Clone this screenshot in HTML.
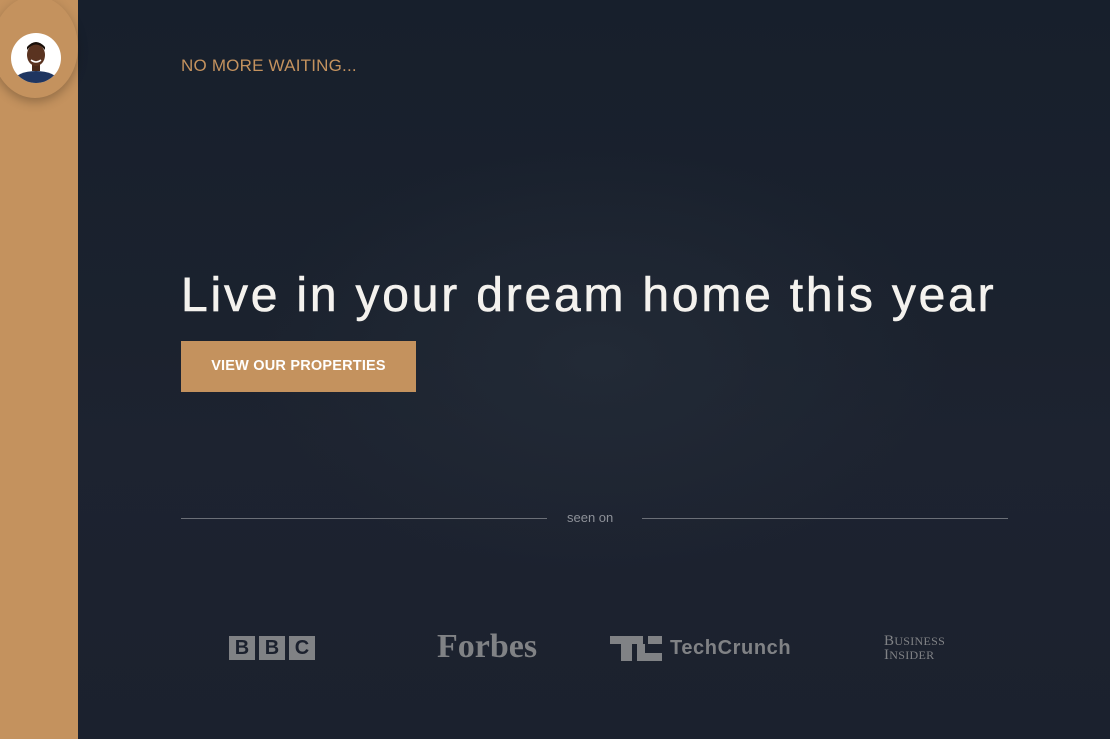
<!DOCTYPE html>
<html><head><style>
*{margin:0;padding:0;box-sizing:border-box}
body{width:1110px;height:739px;overflow:hidden;background:#19202d;font-family:"Liberation Sans",sans-serif;position:relative}
.bg{position:absolute;left:78px;top:0;width:1032px;height:739px;background:
radial-gradient(ellipse 500px 300px at 520px 360px,#222a36 0%,rgba(25,32,45,0) 70%),
linear-gradient(180deg,#171f2c 0%,#1b222e 45%,#1d2330 60%,#1b212e 100%)}
.side{position:absolute;left:0;top:0;width:78px;height:739px;background:#c4925e}
.halo{position:absolute;left:-8px;top:-4px;width:86px;height:102px;border-radius:50%;background:#c4925e;box-shadow:0 4px 10px rgba(0,0,0,.25)}
.av{position:absolute;left:11px;top:33px;width:50px;height:50px;border-radius:50%;background:#fff;overflow:hidden}
.t{position:absolute;color:#c4925e;font-size:17px;left:181px;top:56px;letter-spacing:.2px}
h1{position:absolute;left:181px;top:268px;color:#f4f2ee;font-weight:normal;font-size:48px;letter-spacing:2.8px;white-space:nowrap;-webkit-text-stroke:.6px #f4f2ee}
.btn{position:absolute;left:181px;top:341px;width:235px;height:51px;background:#c4925e;color:#fff;font-size:14.5px;font-weight:bold;letter-spacing:.2px;text-align:center;line-height:51px}
.ln{position:absolute;top:518px;height:1px;background:#6b6f77}
.seen{position:absolute;left:567px;top:510px;color:#8d9098;font-size:13px}
.g{color:#808285;position:absolute}
</style></head><body>
<div class="bg"></div>
<div class="side"></div>
<div class="halo"></div>
<div class="av"><svg width="50" height="50"><ellipse cx="25" cy="48" rx="22" ry="10" fill="#1f3560"/><rect x="21" y="30" width="8" height="8" fill="#4a2a1a"/><ellipse cx="25" cy="22" rx="9" ry="11" fill="#5a3320"/><path d="M16 17 Q25 6 34 17 L34 14 Q25 4 16 14Z" fill="#1a100a"/><path d="M20 27 Q25 31 30 27" stroke="#fff" stroke-width="1.5" fill="none"/></svg></div>
<div class="t">NO MORE WAITING...</div>
<h1>Live in your dream home this year</h1>
<div class="btn">VIEW OUR PROPERTIES</div>
<div class="ln" style="left:181px;width:366px"></div>
<div class="seen">seen on</div>
<div class="ln" style="left:642px;width:366px"></div>
<div class="g" style="left:229px;top:636px;display:flex;gap:4px">
<span style="width:26px;height:24px;background:#808285;color:#1b212e;font:bold 20px/24px 'Liberation Sans';text-align:center">B</span>
<span style="width:26px;height:24px;background:#808285;color:#1b212e;font:bold 20px/24px 'Liberation Sans';text-align:center">B</span>
<span style="width:26px;height:24px;background:#808285;color:#1b212e;font:bold 20px/24px 'Liberation Sans';text-align:center">C</span>
</div>
<div class="g" style="left:437px;top:628px;font:bold 34px 'Liberation Serif',serif;letter-spacing:0">Forbes</div>
<svg class="g" style="left:610px;top:636px" width="52" height="25"><rect x="0" y="0" width="33" height="8" fill="#808285"/><rect x="11" y="8" width="11" height="17" fill="#808285"/><rect x="38" y="0" width="14" height="8" fill="#808285"/><rect x="27" y="8" width="8" height="17" fill="#808285"/><rect x="27" y="17" width="25" height="8" fill="#808285"/></svg>
<div class="g" style="left:670px;top:637px;font:bold 20px 'Liberation Sans';letter-spacing:.6px">TechCrunch</div>
<div class="g" style="left:884px;top:634px;font:15px/14px 'Liberation Serif',serif;letter-spacing:.3px">B<span style="font-size:12px">USINESS</span><br>I<span style="font-size:12px">NSIDER</span></div>
</body></html>
